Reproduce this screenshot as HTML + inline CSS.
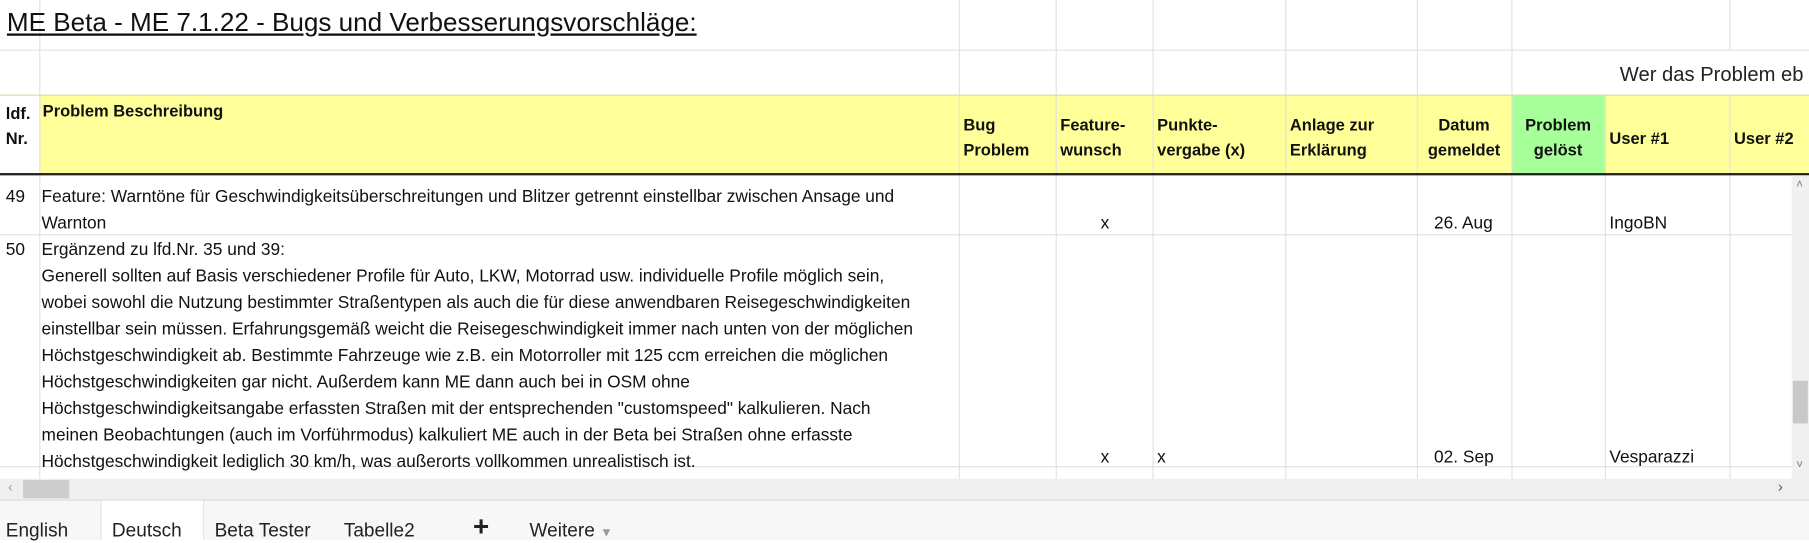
<!DOCTYPE html>
<html><head><meta charset="utf-8"><style>
html,body{margin:0;padding:0;width:1809px;height:540px;overflow:hidden;background:#fff}
#w{position:absolute;left:0;top:0;width:1568px;height:468px;transform:scale(1.15370);transform-origin:0 0;font-family:"Liberation Sans",sans-serif;color:#111}
.a{position:absolute;white-space:nowrap}
.v{position:absolute;width:1px;background:#e2e2e2}
.h{position:absolute;height:1px;background:#e2e2e2}
.hd{font-weight:bold;font-size:14.3px;line-height:22px}
.t{font-size:15px;line-height:23px}
</style></head><body><div id="w">
<div class="a" style="left:34px;top:82px;width:1534px;height:69px;background:#ffff99"></div>
<div class="a" style="left:1310px;top:82px;width:81px;height:69px;background:#a6ff99"></div>
<div class="v" style="left:34px;top:0;height:415px"></div>
<div class="v" style="left:831px;top:0;height:415px"></div>
<div class="v" style="left:915px;top:0;height:415px"></div>
<div class="v" style="left:999px;top:0;height:415px"></div>
<div class="v" style="left:1114px;top:0;height:415px"></div>
<div class="v" style="left:1228px;top:0;height:415px"></div>
<div class="v" style="left:1310px;top:0;height:415px"></div>
<div class="v" style="left:1391px;top:82px;height:333px"></div>
<div class="v" style="left:1499px;top:0;height:43px"></div>
<div class="v" style="left:1499px;top:82px;height:333px"></div>
<div class="h" style="left:0;top:43px;width:1568px"></div>
<div class="h" style="left:0;top:82px;width:1568px;background:#dcdcb0"></div>
<div class="a" style="left:0;top:150px;width:1568px;height:2px;background:#222"></div>
<div class="h" style="left:0;top:203px;width:1553px"></div>
<div class="h" style="left:0;top:404px;width:1553px"></div>
<div class="a" style="left:6px;top:7px;font-size:22.6px;text-decoration:underline">ME Beta - ME 7.1.22 - Bugs und Verbesserungsvorschläge:</div>
<div class="a" style="left:1404px;top:54px;font-size:17.5px;color:#222">Wer das Problem eb</div>
<div class="a hd" style="left:5px;top:88px">ldf.<br>Nr.</div>
<div class="a hd" style="left:37px;top:86px">Problem Beschreibung</div>
<div class="a hd" style="left:835px;top:98px">Bug<br>Problem</div>
<div class="a hd" style="left:919px;top:98px">Feature-<br>wunsch</div>
<div class="a hd" style="left:1003px;top:98px">Punkte-<br>vergabe (x)</div>
<div class="a hd" style="left:1118px;top:98px">Anlage zur<br>Erklärung</div>
<div class="a hd" style="left:1228px;top:98px;width:82px;text-align:center">Datum<br>gemeldet</div>
<div class="a hd" style="left:1310px;top:98px;width:81px;text-align:center">Problem<br>gelöst</div>
<div class="a hd" style="left:1395px;top:110px">User #1</div>
<div class="a hd" style="left:1503px;top:110px">User #2</div>
<div class="a t" style="left:5px;top:159px">49</div>
<div class="a t" style="left:36px;top:159px">Feature: Warntöne für Geschwindigkeitsüberschreitungen und Blitzer getrennt einstellbar zwischen Ansage und<br>Warnton</div>
<div class="a t" style="left:954px;top:182px">x</div>
<div class="a t" style="left:1243px;top:182px">26. Aug</div>
<div class="a t" style="left:1395px;top:182px">IngoBN</div>
<div class="a t" style="left:5px;top:205px">50</div>
<div class="a t" style="left:36px;top:205px">Ergänzend zu lfd.Nr. 35 und 39:<br>Generell sollten auf Basis verschiedener Profile für Auto, LKW, Motorrad usw. individuelle Profile möglich sein,<br>wobei sowohl die Nutzung bestimmter Straßentypen als auch die für diese anwendbaren Reisegeschwindigkeiten<br>einstellbar sein müssen. Erfahrungsgemäß weicht die Reisegeschwindigkeit immer nach unten von der möglichen<br>Höchstgeschwindigkeit ab. Bestimmte Fahrzeuge wie z.B. ein Motorroller mit 125 ccm erreichen die möglichen<br>Höchstgeschwindigkeiten gar nicht. Außerdem kann ME dann auch bei in OSM ohne<br>Höchstgeschwindigkeitsangabe erfassten Straßen mit der entsprechenden "customspeed" kalkulieren. Nach<br>meinen Beobachtungen (auch im Vorführmodus) kalkuliert ME auch in der Beta bei Straßen ohne erfasste<br>Höchstgeschwindigkeit lediglich 30 km/h, was außerorts vollkommen unrealistisch ist.</div>
<div class="a t" style="left:954px;top:385px">x</div>
<div class="a t" style="left:1003px;top:385px">x</div>
<div class="a t" style="left:1243px;top:385px">02. Sep</div>
<div class="a t" style="left:1395px;top:385px">Vesparazzi</div>
<div class="a" style="left:1553px;top:152px;width:15px;height:263px;background:#f0f0f0"></div>
<div class="a" style="left:1554px;top:330px;width:13px;height:37px;background:#c8c8c8"></div>
<div class="a" style="left:1557px;top:155px;font-size:10px;color:#777">˄</div>
<div class="a" style="left:1557px;top:398px;font-size:10px;color:#777">˅</div>
<div class="a" style="left:0;top:415px;width:1568px;height:18px;background:#efefef"></div>
<div class="a" style="left:20px;top:416px;width:40px;height:16px;background:#cdcdcd"></div>
<div class="a" style="left:7px;top:415px;font-size:12px;color:#999">‹</div>
<div class="a" style="left:1541px;top:414px;font-size:13px;color:#555">›</div>
<div class="h" style="left:0;top:433px;width:1568px;background:#dadada"></div>
<div class="a" style="left:0;top:434px;width:1568px;height:34px;background:#f7f7f7"></div>
<div class="a" style="left:87px;top:434px;width:88px;height:34px;background:#fff;border-left:1px solid #e4e4e4;border-right:1px solid #e4e4e4"></div>
<div class="a" style="left:5px;top:451px;font-size:16.5px;color:#222">English</div>
<div class="a" style="left:97px;top:451px;font-size:16.5px;color:#222">Deutsch</div>
<div class="a" style="left:186px;top:451px;font-size:16.5px;color:#222">Beta Tester</div>
<div class="a" style="left:298px;top:451px;font-size:16.5px;color:#222">Tabelle2</div>
<div class="a" style="left:410px;top:443px;font-size:24px;font-weight:bold;color:#222">+</div>
<div class="a" style="left:459px;top:451px;font-size:16.5px;color:#222">Weitere <span style="color:#999;font-size:11px">▼</span></div>
</div></body></html>
